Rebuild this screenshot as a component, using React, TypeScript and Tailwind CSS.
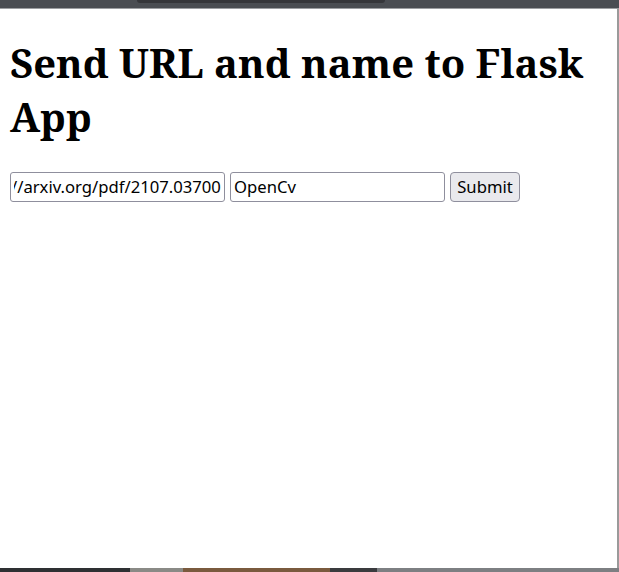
import React, { useLayoutEffect, useRef } from 'react';

export default function App() {
  const urlRef = useRef<HTMLInputElement>(null);

  useLayoutEffect(() => {
    const el = urlRef.current;
    if (el) el.scrollLeft = el.scrollWidth;
  }, []);

  return (
    <div className="flex h-[572px] w-[619px] flex-col overflow-hidden bg-[#4a4d52]">
      {/* browser chrome strip */}
      <div className="flex h-[8px] shrink-0 bg-[#4a4d52]">
        <div className="ml-[137px] h-[3px] w-[248px] rounded-b-[4px] bg-[#35363a]" />
      </div>
      <div className="h-px shrink-0 bg-[#9c9ea1]" />

      <div className="flex min-h-0 flex-1">
        <div className="flex-1 bg-white px-[10px] font-['Noto_Sans','Open_Sans',sans-serif] text-black">
          <h1 className="my-[26.8px] font-['Noto_Serif','DejaVu_Serif',serif] text-[40px] font-bold leading-[54.5px]">
            Send URL and name to Flask App
          </h1>
          <form className="flex items-center gap-[5px]" onSubmit={(e) => e.preventDefault()}>
            <input
              ref={urlRef}
              type="text"
              defaultValue="https://arxiv.org/pdf/2107.03700"
              className="h-[30px] w-[215px] rounded-[3px] border border-[#8f8f9d] px-[3px] text-[16.67px] outline-none"
            />
            <input
              type="text"
              defaultValue="OpenCv"
              className="h-[30px] w-[215px] rounded-[3px] border border-[#8f8f9d] px-[3px] text-[16.67px] outline-none"
            />
            <button
              type="submit"
              className="h-[30px] w-[70px] rounded-[4px] border border-[#8f8f9d] bg-[#e9e9ed] text-[16.67px]"
            >
              Submit
            </button>
          </form>
        </div>
        <div className="w-[2px] bg-[#9a9a9a]" />
      </div>

      {/* bottom edge of the desktop behind */}
      <div className="flex h-[4px] shrink-0">
        <div className="w-[130px] bg-[#2e3033]" />
        <div className="w-[53px] bg-[#8a8a86]" />
        <div className="w-[147px] bg-[#7a5a3e]" />
        <div className="w-[47px] bg-[#3a3b3e]" />
        <div className="flex-1 bg-[#7d7f82]" />
      </div>
    </div>
  );
}
